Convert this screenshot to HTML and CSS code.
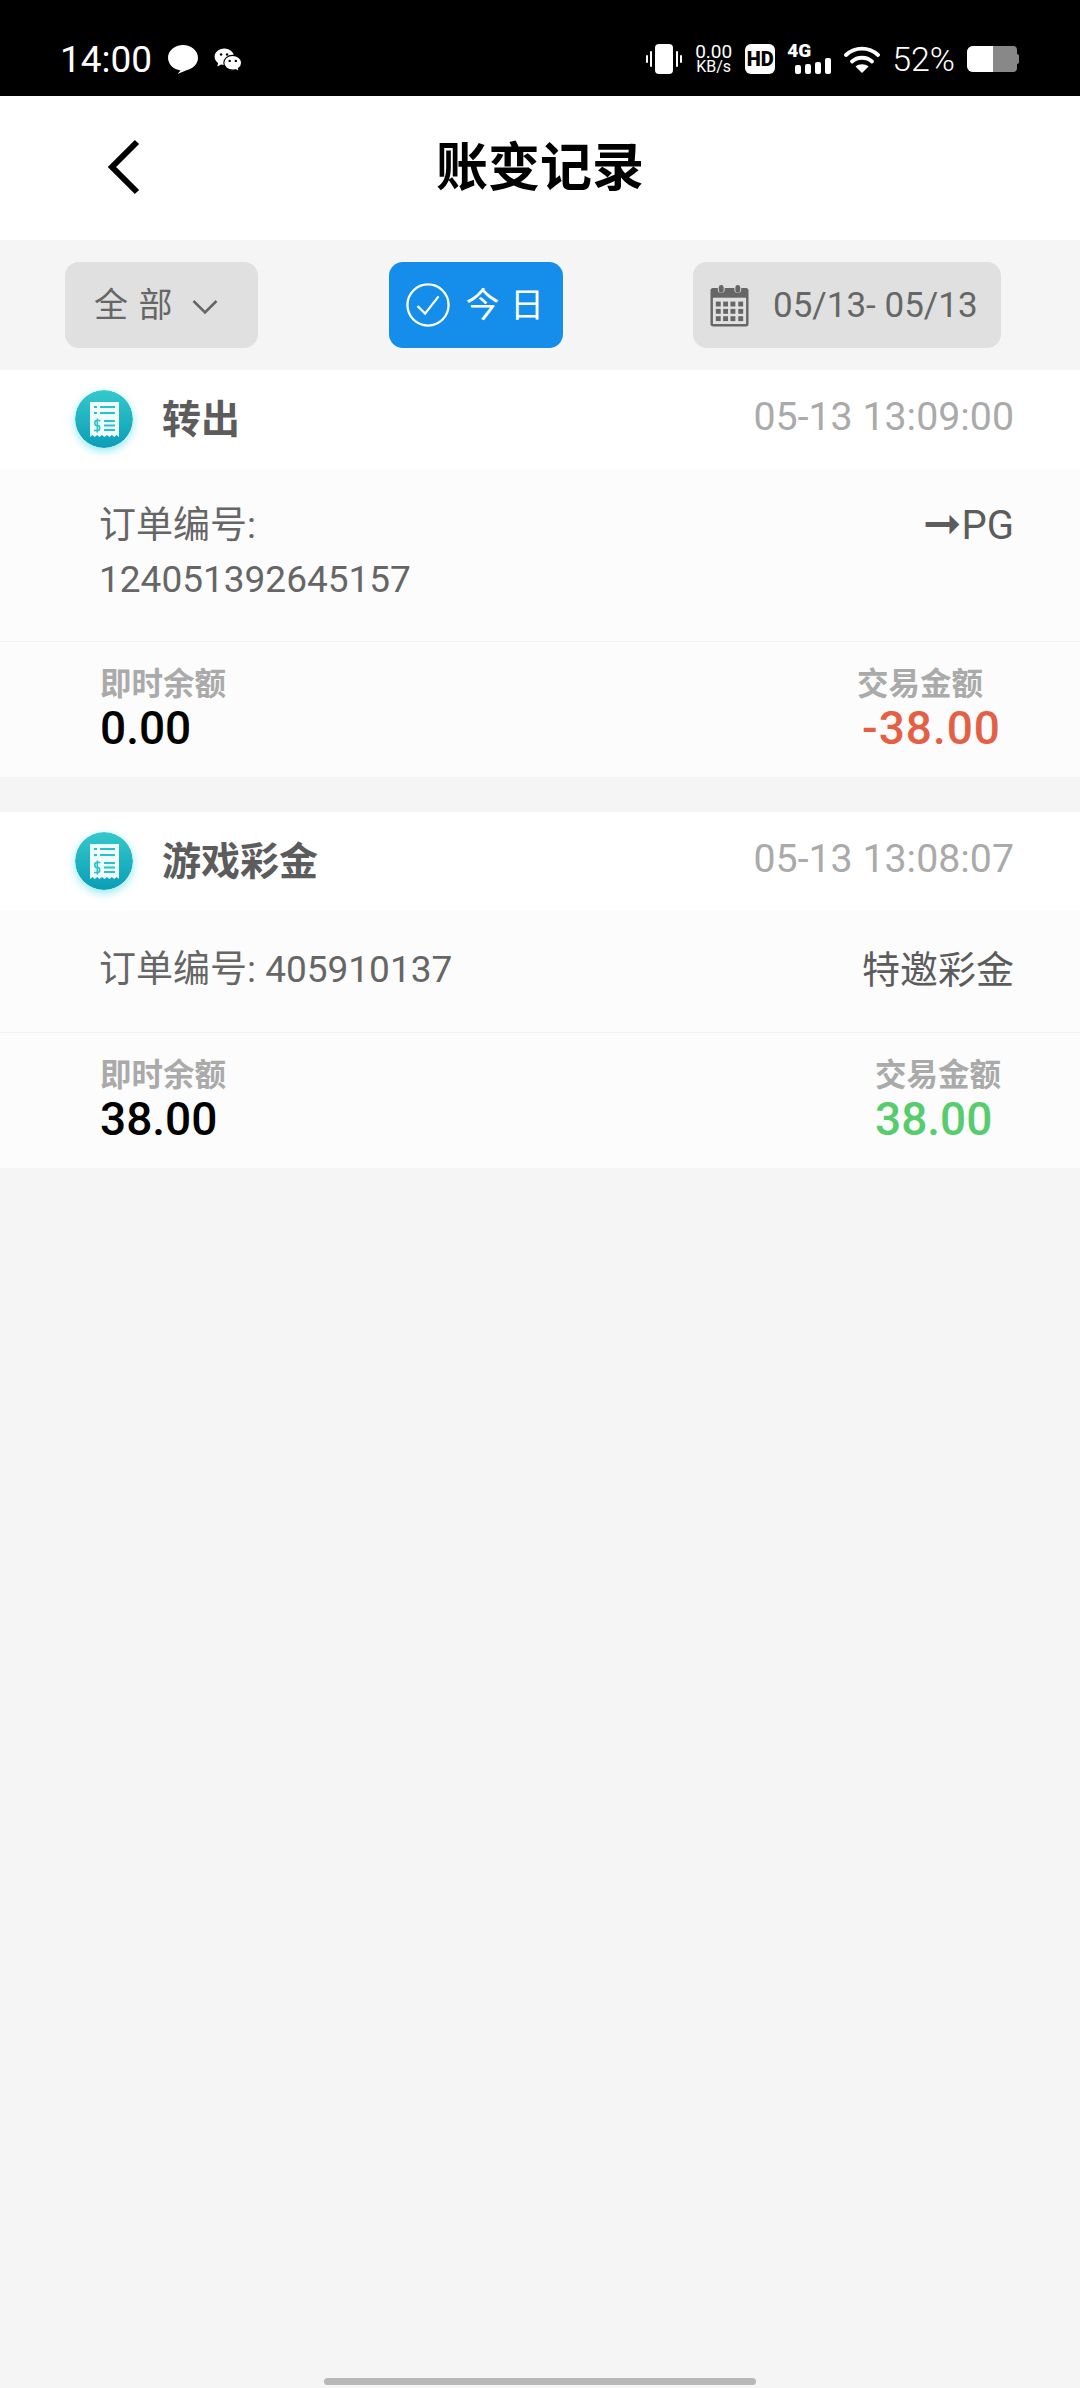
FILE: index.html
```html
<!DOCTYPE html>
<html lang="zh-CN">
<head>
  <meta charset="UTF-8">
  <title>账变记录</title>
  <link rel="stylesheet" href="styles.css">
</head>
<body>

  <div class="status-bar">
    <div class="status-left">
      <span class="clock">14:00</span>
      <svg class="ic-msg" viewBox="0 0 30 29"><path d="M15 0C6.700 0 0 5.700 0 12.800C0 19.300 5.600 24.600 12.500 25.400L9.500 29L18.500 25.300C25 23.900 30 18.900 30 12.800C30 5.700 23.300 0 15 0Z" fill="#fff"/></svg>
      <svg class="ic-wechat" viewBox="0 0 30 26">
        <path d="M11 0.500C5 0.500 0.500 4.500 0.500 9.500C0.500 12.500 2 14.700 4.200 16.300L3.500 20L7.500 18C8.500 18.300 9.500 18.500 11 18.500C17 18.500 21.500 14.500 21.500 9.500C21.500 4.500 17 0.500 11 0.500Z" fill="#fff"/>
        <path d="M20 8C14.500 8 10.500 11.600 10.500 16C10.500 20.400 14.500 24 20 24C21 24 22 23.800 23 23.500L27 25.500L26.200 22.300C28.500 20.800 29.800 18.500 29.800 16C29.800 11.600 25.500 8 20 8Z" fill="#fff" stroke="#000" stroke-width="1.200"/>
        <circle cx="7.500" cy="7" r="1.300" fill="#000"/><circle cx="14" cy="7" r="1.300" fill="#000"/>
        <circle cx="16.800" cy="14" r="1.300" fill="#000"/><circle cx="23.500" cy="14" r="1.300" fill="#000"/>
      </svg>
    </div>
    <div class="status-right">
      <svg class="ic-vibrate" viewBox="0 0 36 30" fill="#fff">
        <rect x="9" y="0" width="18" height="30" rx="4"/>
        <rect x="0" y="11" width="2" height="8" rx="1"/><rect x="4" y="7" width="2" height="16" rx="1"/>
        <rect x="30" y="7" width="2" height="16" rx="1"/><rect x="34" y="11" width="2" height="8" rx="1"/>
      </svg>
      <div class="net-speed"><span>0.00</span><span class="net-unit">KB/s</span></div>
      <div class="hd-badge">HD</div>
      <div class="signal">
        <span class="signal-label">4G</span>
        <div class="signal-bars">
          <i class="bar-1"></i><i class="bar-2"></i><i class="bar-3"></i><i class="bar-4"></i>
        </div>
      </div>
      <svg class="ic-wifi" viewBox="0 0 36 28">
        <path d="M2 10C11 1.500 25 1.500 34 10" fill="none" stroke="#fff" stroke-width="3.800" stroke-linecap="round"/>
        <path d="M8 16.500C13.500 11.500 22.500 11.500 28 16.500" fill="none" stroke="#fff" stroke-width="3.800" stroke-linecap="round"/>
        <path d="M18 28L11.500 21.500C15 18.500 21 18.500 24.500 21.500Z" fill="#fff"/>
      </svg>
      <span class="battery-text">52%</span>
      <div class="battery">
        <div class="battery-level"></div>
        <div class="battery-cap"></div>
      </div>
    </div>
  </div>

  <div class="top-bar">
    <svg class="ic-back" viewBox="0 0 34 56"><path d="M31 3L6 28L31 53" fill="none" stroke="#000" stroke-width="6"/></svg>
    <h1 class="title">账变记录</h1>
  </div>

  <div class="filter-bar">
    <div class="filter-btn filter-type">
      <span class="filter-cjk">全 部</span>
      <svg class="ic-chevron" viewBox="0 0 26 16"><path d="M1.500 2L13 13.500L24.500 2" fill="none" stroke="#666" stroke-width="2.600"/></svg>
    </div>
    <div class="filter-btn filter-today">
      <svg class="ic-check" viewBox="0 0 46 46">
        <circle cx="23" cy="23" r="21.500" fill="none" stroke="#fff" stroke-width="2.400"/>
        <path d="M12 24L20 32L34 14" fill="none" stroke="#fff" stroke-width="2.400"/>
      </svg>
      <span class="filter-cjk">今 日</span>
    </div>
    <div class="filter-btn filter-date">
      <svg class="ic-calendar" viewBox="0 0 40 44">
        <path d="M3 4H8V6C8 10 15 10 15 6V4H25V6C25 10 32 10 32 6V4H37C38.500 4 39.500 5 39.500 6.500V41C39.500 42.500 38.500 43.500 37 43.500H3C1.500 43.500 0.500 42.500 0.500 41V6.500C0.500 5 1.500 4 3 4Z" fill="#666"/>
        <rect x="3" y="14" width="34" height="27" fill="#e0e0e0"/>
        <rect x="9" y="1" width="5" height="8" rx="2.500" fill="#666"/><rect x="26" y="1" width="5" height="8" rx="2.500" fill="#666"/>
        <g fill="#666">
          <rect x="6" y="18" width="5" height="5"/><rect x="13.500" y="18" width="5" height="5"/><rect x="21" y="18" width="5" height="5"/><rect x="29" y="18" width="5" height="5"/>
          <rect x="6" y="25.500" width="5" height="5"/><rect x="13.500" y="25.500" width="5" height="5"/><rect x="21" y="25.500" width="5" height="5"/><rect x="29" y="25.500" width="5" height="5"/>
          <rect x="6" y="33" width="5" height="5"/><rect x="13.500" y="33" width="5" height="5"/><rect x="21" y="33" width="5" height="5"/><rect x="29" y="33" width="5" height="5"/>
        </g>
      </svg>
      <span>05/13- 05/13</span>
    </div>
  </div>

  <div id="records"></div>

  <div class="spacer"></div>
  <div class="gesture-bar"></div>

  <script>
    const records = [
      {
        type: "转出",
        time: "05-13 13:09:00",
        order: "订单编号:<br>124051392645157",
        note: '<span class="note-arrow">➞</span>PG',
        balance: "0.00",
        amount: "-38.00",
        amountClass: "minus",
        detailClass: "detail-tall"
      },
      {
        type: "游戏彩金",
        time: "05-13 13:08:07",
        order: "订单编号: 405910137",
        note: "特邀彩金",
        balance: "38.00",
        amount: "38.00",
        amountClass: "plus",
        detailClass: "detail-short"
      }
    ];

    const receiptIcon = `
      <svg viewBox="0 0 58 58" class="ic-receipt">
        <defs>
          <linearGradient id="tealFade" x1="0" y1="0" x2="0" y2="1">
            <stop offset="0" stop-color="#35c9cc"/>
            <stop offset="1" stop-color="#0a9db7"/>
          </linearGradient>
        </defs>
        <circle cx="29" cy="29" r="29" fill="url(#tealFade)"/>
        <path d="M15 12H44V47L41.600 45L39.200 47L36.800 45L34.400 47L32 45L29.500 47L27 45L24.600 47L22.200 45L19.800 47L17.400 45L15 47Z" fill="#eefcfb"/>
        <g stroke="#2cc0c8" stroke-width="2" fill="none">
          <path d="M19 17H22M19 23H22M25 17H40M25 23H40M29 31H40M29 35.500H40M29 40H40"/>
          <path d="M25.500 30.500H21.500C19.300 30.500 19.300 35.500 21.500 35.500H23C25.200 35.500 25.200 40.500 23 40.500H19M22.300 28.500V42.500" stroke-width="1.600"/>
        </g>
      </svg>`;

    const list = document.getElementById('records');

    records.forEach(record => {
      const card = document.createElement('div');
      card.className = 'record';
      card.innerHTML = `
        <div class="record-head">
          <div class="record-type">${receiptIcon}<span>${record.type}</span></div>
          <span class="record-time">${record.time}</span>
        </div>
        <div class="record-detail ${record.detailClass}">
          <div class="record-order">${record.order}</div>
          <div class="record-note">${record.note}</div>
        </div>
        <div class="record-sums">
          <div class="sum">
            <div class="sum-label">即时余额</div>
            <div class="sum-value">${record.balance}</div>
          </div>
          <div class="sum">
            <div class="sum-label">交易金额</div>
            <div class="sum-value ${record.amountClass}">${record.amount}</div>
          </div>
        </div>
      `;
      list.appendChild(card);
    });
  </script>

</body>
</html>
```

FILE: styles.css
```css
* {
  box-sizing: border-box;
}

html, body {
  height: 100%;
}

body {
  margin: 0;
  display: flex;
  flex-direction: column;
  background-color: #f5f5f5;
  font-family: Roboto, "Noto Sans CJK SC", sans-serif;
  color: #666;
}

/* status bar */
.status-bar {
  height: 96px;
  padding: 22px 61px 0 60px;
  display: flex;
  justify-content: space-between;
  align-items: center;
  background-color: #000;
  color: #fff;
}

.status-left, .status-right {
  display: flex;
  align-items: center;
}

.clock {
  font-size: 37px;
  margin-right: 16px;
}

.ic-msg {
  width: 30px;
  height: 29px;
  margin-right: 16px;
}

.ic-wechat {
  width: 28px;
  height: 24px;
  margin-top: 1px;
}

.ic-vibrate {
  width: 36px;
  height: 30px;
  margin-right: 13px;
}

.net-speed {
  width: 37px;
  display: flex;
  flex-direction: column;
  align-items: center;
  font-size: 19px;
  line-height: 16px;
  margin-right: 13px;
}

.net-unit {
  font-size: 16px;
  line-height: 14px;
}

.hd-badge {
  width: 30px;
  height: 30px;
  margin-right: 12px;
  border-radius: 6px;
  background-color: #fff;
  color: #000;
  font-size: 20px;
  font-weight: 900;
  line-height: 30px;
  text-align: center;
}

.signal {
  width: 44px;
  height: 30px;
  margin-right: 13px;
  display: flex;
  flex-direction: column;
  justify-content: space-between;
}

.signal-label {
  font-size: 19px;
  font-weight: 900;
  line-height: 14px;
}

.signal-bars {
  display: flex;
  align-items: flex-end;
  justify-content: flex-end;
  gap: 4px;
}

.signal-bars i {
  width: 6px;
  background-color: #fff;
  border-radius: 2px;
}

.bar-1 { height: 9px; }
.bar-2 { height: 10px; }
.bar-3 { height: 12px; }
.bar-4 { height: 16px; }

.ic-wifi {
  width: 36px;
  height: 28px;
  margin-right: 12px;
}

.battery-text {
  font-size: 34px;
  font-weight: 300;
  margin-right: 12px;
}

.battery {
  width: 50px;
  height: 26px;
  margin-right: 2px;
  display: flex;
  position: relative;
  border-radius: 6px 4px 4px 6px;
  background-color: #888;
}

.battery-level {
  width: 26px;
  background-color: #fff;
  border-radius: 6px 0 0 6px;
}

.battery-cap {
  position: absolute;
  right: -2px;
  top: 8px;
  width: 2px;
  height: 10px;
  background-color: #888;
  border-radius: 0 2px 2px 0;
}

/* header */
.top-bar {
  height: 144px;
  padding-bottom: 10px;
  position: relative;
  display: flex;
  align-items: center;
  justify-content: center;
  background-color: #fff;
}

.ic-back {
  position: absolute;
  left: 106px;
  top: 43px;
  width: 34px;
  height: 56px;
}

.title {
  margin: 0;
  font-size: 52px;
  font-weight: 700;
  color: #000;
}

/* filters */
.filter-bar {
  height: 130px;
  padding: 22px 79px 22px 65px;
  display: flex;
  justify-content: space-between;
}

.filter-btn {
  height: 86px;
  display: flex;
  align-items: center;
  border-radius: 14px;
  background-color: #e0e0e0;
  font-size: 34px;
}

.filter-cjk {
  padding-bottom: 5px;
  word-spacing: 2px;
}

.filter-type {
  width: 193px;
  padding-left: 29px;
}

.ic-chevron {
  width: 26px;
  height: 16px;
  margin: 4px 0 0 20px;
}

.filter-today {
  width: 174px;
  padding-left: 17px;
  background-color: #148eea;
  color: #fff;
}

.ic-check {
  width: 44px;
  height: 44px;
  margin-right: 16px;
}

.filter-date {
  width: 308px;
  padding-left: 17px;
  font-size: 35px;
}

.ic-calendar {
  width: 39px;
  height: 43px;
  margin-right: 24px;
}

/* records */
.record {
  margin-bottom: 35px;
}

.record-head {
  height: 99px;
  padding: 0 66px 0 75px;
  display: flex;
  align-items: center;
  justify-content: space-between;
  background-color: #fff;
}

.record-type {
  display: flex;
  align-items: center;
  font-size: 39px;
  font-weight: 700;
  color: #5c5c5c;
}

.record-type span {
  padding-bottom: 8px;
}

.ic-receipt {
  width: 58px;
  height: 58px;
  margin: 0 29px 1px 0;
  border-radius: 50%;
  box-shadow: 0 3px 8px rgba(40, 210, 220, 0.5);
}

.record-time {
  padding-bottom: 6px;
  font-size: 39.300px;
  color: #aaa;
}

.record-detail {
  padding: 0 66px 0 99px;
  display: flex;
  justify-content: space-between;
  background-color: #fcfcfc;
  font-size: 37px;
  line-height: 54px;
  color: #666;
}

.detail-tall {
  height: 172px;
  padding-top: 30px;
}

.detail-tall .record-note {
  font-size: 40px;
}

.detail-short {
  height: 121px;
  padding-top: 32px;
}

.record-note {
  font-size: 38px;
  color: #5c5c5c;
}

.note-arrow {
  font-size: 46px;
  line-height: 40px;
}

.record-sums {
  height: 136px;
  padding: 25px 79px 0 100px;
  display: flex;
  justify-content: space-between;
  background-color: #fcfcfc;
  border-top: 1px solid #f3f3f3;
}

.sum-label {
  font-size: 31.500px;
  line-height: 36px;
  font-weight: 700;
  color: #aaa;
}

.sum-value {
  font-size: 46px;
  line-height: 50px;
  font-weight: 500;
  color: #000;
}

.minus {
  padding-left: 5px;
  letter-spacing: 1px;
  color: #e55f44;
}

.plus {
  color: #57cc6d;
}

/* bottom gesture line */
.spacer {
  flex: 1;
}

.gesture-bar {
  width: 432px;
  height: 7px;
  margin: 0 auto 3px;
  border-radius: 4px;
  background-color: #b8b8b8;
}
```
